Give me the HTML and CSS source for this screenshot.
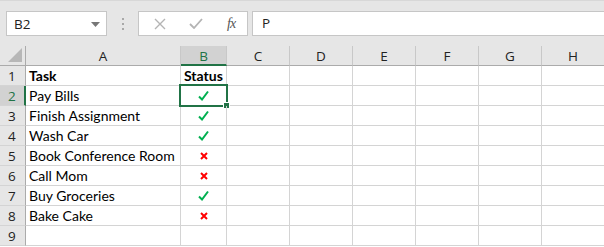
FILE: index.html
```html
<!DOCTYPE html>
<html>
<head>
<meta charset="utf-8">
<link rel="stylesheet" href="styles.css">
</head>
<body>
<div class="app">
  <div class="toolbar">
    <div class="namebox">
      <span class="name">B2</span>
      <svg class="dd" width="9" height="5" viewBox="0 0 9 5"><path d="M0 0H9L4.5 5Z" fill="#777"/></svg>
    </div>
    <div class="grip"><i></i><i></i><i></i></div>
    <div class="fbtns">
      <svg class="ico" width="12" height="12" viewBox="0 0 12 12"><path d="M1 1L11 11M11 1L1 11" stroke="#b4b4b4" stroke-width="1.4"/></svg>
      <svg class="ico" width="14" height="11" viewBox="0 0 14 11"><path d="M1 6L5 10L13 1" stroke="#b4b4b4" stroke-width="1.8" fill="none"/></svg>
      <span class="fx">fx</span>
    </div>
    <div class="finput">P</div>
  </div>
  <div class="grid">
    <div class="corner"><svg width="14" height="14" viewBox="0 0 14 14"><path d="M14 0V14H0Z" fill="#b7b7b7"/></svg></div>
    <div class="ch">A</div><div class="ch sel">B</div><div class="ch">C</div><div class="ch">D</div><div class="ch">E</div><div class="ch">F</div><div class="ch">G</div><div class="ch">H</div>

    <div class="rh">1</div><div class="c b">Task</div><div class="c b">Status</div><div class="c"></div><div class="c"></div><div class="c"></div><div class="c"></div><div class="c"></div><div class="c"></div>

    <div class="rh sel">2</div><div class="c">Pay Bills</div><div class="c m active"><svg class="ok" width="11" height="11" viewBox="0 0 11 11"><path d="M1 6.5L4 9.5L10 1.5" stroke="#00b050" stroke-width="2" fill="none"/></svg><span class="cursel"><span class="handle"></span></span></div><div class="c"></div><div class="c"></div><div class="c"></div><div class="c"></div><div class="c"></div><div class="c"></div>

    <div class="rh">3</div><div class="c">Finish Assignment</div><div class="c m"><svg class="ok" width="11" height="11" viewBox="0 0 11 11"><path d="M1 6.5L4 9.5L10 1.5" stroke="#00b050" stroke-width="2" fill="none"/></svg></div><div class="c"></div><div class="c"></div><div class="c"></div><div class="c"></div><div class="c"></div><div class="c"></div>

    <div class="rh">4</div><div class="c">Wash Car</div><div class="c m"><svg class="ok" width="11" height="11" viewBox="0 0 11 11"><path d="M1 6.5L4 9.5L10 1.5" stroke="#00b050" stroke-width="2" fill="none"/></svg></div><div class="c"></div><div class="c"></div><div class="c"></div><div class="c"></div><div class="c"></div><div class="c"></div>

    <div class="rh">5</div><div class="c">Book Conference Room</div><div class="c m"><svg class="no" width="8" height="8" viewBox="0 0 8 8"><path d="M1 1L7 7M7 1L1 7" stroke="#ff0000" stroke-width="2"/></svg></div><div class="c"></div><div class="c"></div><div class="c"></div><div class="c"></div><div class="c"></div><div class="c"></div>

    <div class="rh">6</div><div class="c">Call Mom</div><div class="c m"><svg class="no" width="8" height="8" viewBox="0 0 8 8"><path d="M1 1L7 7M7 1L1 7" stroke="#ff0000" stroke-width="2"/></svg></div><div class="c"></div><div class="c"></div><div class="c"></div><div class="c"></div><div class="c"></div><div class="c"></div>

    <div class="rh">7</div><div class="c">Buy Groceries</div><div class="c m"><svg class="ok" width="11" height="11" viewBox="0 0 11 11"><path d="M1 6.5L4 9.5L10 1.5" stroke="#00b050" stroke-width="2" fill="none"/></svg></div><div class="c"></div><div class="c"></div><div class="c"></div><div class="c"></div><div class="c"></div><div class="c"></div>

    <div class="rh">8</div><div class="c">Bake Cake</div><div class="c m"><svg class="no" width="8" height="8" viewBox="0 0 8 8"><path d="M1 1L7 7M7 1L1 7" stroke="#ff0000" stroke-width="2"/></svg></div><div class="c"></div><div class="c"></div><div class="c"></div><div class="c"></div><div class="c"></div><div class="c"></div>

    <div class="rh">9</div><div class="c"></div><div class="c"></div><div class="c"></div><div class="c"></div><div class="c"></div><div class="c"></div><div class="c"></div><div class="c"></div>
  </div>
</div>
</body>
</html>
```

FILE: styles.css
```css
* { box-sizing: border-box; }
html, body { margin: 0; padding: 0; background: #fff; }
.app { width: 604px; height: 247px; overflow: hidden; font-family: "Open Sans", "Liberation Sans", sans-serif; }

.toolbar {
  height: 46px;
  background: #e6e6e6;
  border-top: 1px solid #d8d8d8;
  display: flex;
  align-items: flex-start;
  padding-top: 10px;
  padding-left: 6px;
}
.namebox {
  width: 101px; height: 25px;
  background: #fff;
  border: 1px solid #c6c6c6;
  display: flex; align-items: center; justify-content: space-between;
  padding: 0 6px 0 7px;
}
.name { font-size: 13.5px; color: #222; }
.dd { margin-top: 1px; }
.grip { width: 31px; height: 25px; display: flex; flex-direction: column; align-items: center; justify-content: center; gap: 3px; }
.grip i { display: block; width: 2px; height: 2px; background: #a8a8a8; }
.fbtns {
  width: 110px; height: 25px;
  background: #fff;
  border: 1px solid #c6c6c6;
  display: flex; align-items: center;
  padding-left: 15px;
}
.fbtns .ico:nth-child(1) { margin-right: 23px; }
.fbtns .ico:nth-child(2) { margin-right: 24px; }
.fx { font-family: "Liberation Serif", serif; font-style: italic; font-size: 14px; color: #555; letter-spacing: -1px; }
.finput {
  flex: 1; height: 25px; margin-left: 4px;
  background: #fff;
  border: 1px solid #c6c6c6; border-right: none;
  font-size: 13.5px; color: #222;
  padding-left: 9px; line-height: 23px;
}

.grid {
  display: grid;
  grid-template-columns: 26px 155px 46px 63px 63px 63px 63px 63px 63px;
  grid-template-rows: repeat(10, 20px);
}
.corner, .ch, .rh { background: #e6e6e6; color: #222; font-size: 13.5px; }
.corner { border-right: 1px solid #ababab; border-bottom: 1px solid #ababab; display: flex; align-items: flex-end; justify-content: flex-end; padding: 0 3px 3px 0; }
.ch {
  display: flex; align-items: center; justify-content: center;
  border-bottom: 1px solid #ababab;
  border-right: 1px solid #c8c8c8;
  padding-top: 1px;
}
.ch.sel { background: #d2d2d2; border-bottom: 2px solid #217346; color: #217346; padding-top: 2px; }
.rh {
  display: flex; align-items: center; justify-content: flex-start;
  padding-left: 8px;
  border-right: 1px solid #ababab;
  border-bottom: 1px solid #d4d4d4;
}
.rh.sel { background: #d2d2d2; border-right: 2px solid #217346; color: #217346; }
.c {
  border-right: 1px solid #d4d4d4;
  border-bottom: 1px solid #d4d4d4;
  font-family: "Lato", "Liberation Sans", sans-serif;
  font-size: 14px; color: #000;
  padding-left: 3px;
  line-height: 20px;
  white-space: nowrap;
}
.c.b { font-weight: bold; }
.c.m { display: flex; align-items: center; justify-content: center; padding-left: 0; position: relative; }
.active { position: relative; }
.cursel {
  position: absolute; left: -2px; top: -2px; right: -2px; bottom: -2px;
  border: 2px solid #217346;
}
.handle {
  position: absolute; right: -4px; bottom: -4px; width: 5px; height: 5px;
  background: #217346; border: 1px solid #fff; box-sizing: content-box;
}
```
